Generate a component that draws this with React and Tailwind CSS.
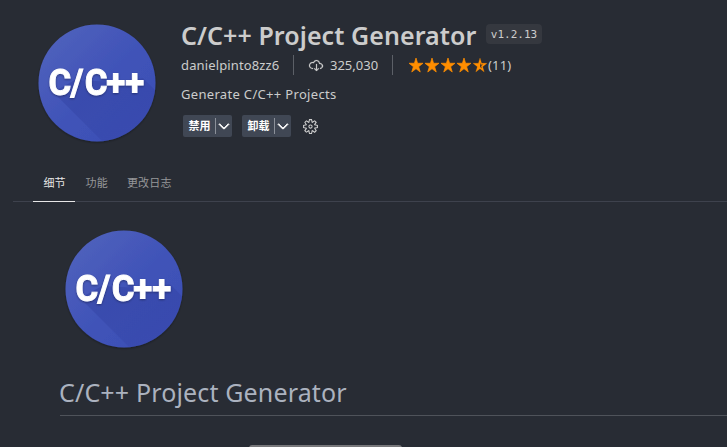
import React from 'react';
import { VscGear, VscStarFull, VscStarHalf, VscCloudDownload, VscChevronDown } from 'react-icons/vsc';

function Logo({ id }) {
  return (
    <svg width="124" height="124" viewBox="0 0 124 124" className="block shrink-0">
      <defs>
        <linearGradient id={id + 'bg'} x1="0.1" y1="0.1" x2="0.8" y2="0.8">
          <stop offset="0" stopColor="#4f61bc" />
          <stop offset="0.6" stopColor="#4053b8" />
          <stop offset="1" stopColor="#3d50b6" />
        </linearGradient>
        <linearGradient id={id + 'sh'} x1="0" y1="0" x2="0.7" y2="1">
          <stop offset="0" stopColor="#303f9f" stopOpacity="0.5" />
          <stop offset="1" stopColor="#303f9f" stopOpacity="0.25" />
        </linearGradient>
        <clipPath id={id + 'c'}>
          <circle cx="62" cy="61" r="58.5" />
        </clipPath>
        <filter id={id + 'f'} x="-20%" y="-20%" width="140%" height="140%">
          <feDropShadow dx="0" dy="1" stdDeviation="1.2" floodColor="#000" floodOpacity="0.35" />
        </filter>
      </defs>
      <circle cx="62" cy="61" r="58.5" fill={'url(#' + id + 'bg)'} filter={'url(#' + id + 'f)'} />
      <path d="M18 70 L72 124 H124 V72 L108 56 L80 60 L40 58Z" fill={'url(#' + id + 'sh)'} clipPath={'url(#' + id + 'c)'} />
      <text
        transform="scale(0.94 1)"
        x="14.400 37.700 52.900 75.800 96"
        y="73.500 73.500 73.500 73.500 73.500"
        fill="#fff"
        stroke="#fff"
        strokeWidth="0.9"
        fontFamily="Roboto, sans-serif"
        fontWeight="700"
        fontSize="37"
        filter={'url(#' + id + 'f)'}
      >
        C/C++
      </text>
    </svg>
  );
}

function ActionButton({ children }) {
  return (
    <div className="flex h-[22px] w-[49px] items-center rounded-[2px] bg-[#404754] text-white">
      <span className="w-8 shrink-0 pl-[5.5px] text-[11px] font-bold leading-[22px]">{children}</span>
      <span className="h-4 w-px shrink-0 bg-[#8b9099]" />
      <VscChevronDown className="shrink-0" size={16} stroke="currentColor" strokeWidth="0.9" />
    </div>
  );
}

function Stars() {
  return (
    <div className="flex text-[#ff8e00]">
      {[0, 1, 2, 3].map((i) => (
        <VscStarFull key={i} size={16} stroke="currentColor" strokeWidth="0.7" />
      ))}
      <VscStarHalf size={16} stroke="currentColor" strokeWidth="0.2" />
    </div>
  );
}

export default function App() {
  return (
    <div className="h-[447px] w-[727px] overflow-hidden bg-[#282c34] font-['Noto_Sans','Noto_Sans_CJK_SC',sans-serif] text-[#cccccc]">
      <header className="flex h-[165px] pl-[35px] pt-[22px]">
        <Logo id="a" />
        <div className="ml-[22px] flex flex-col">
          <div className="flex h-[26px] items-center">
            <h1 className="w-[305px] whitespace-nowrap text-[25px] font-semibold leading-[24px] tracking-[0.07px]">C/C++ Project Generator</h1>
            <span className="-mt-[2px] h-5 w-14 rounded bg-[#35383f] text-center font-['DejaVu_Sans_Mono',monospace] text-[11px] leading-[21px]">v1.2.13</span>
          </div>
          <div className="mt-[7px] flex h-5 items-center whitespace-nowrap text-[13px] leading-5">
            <span className="w-28 tracking-[0.13px]">danielpinto8zz6</span>
            <span className="h-5 w-px bg-[#5c6067]" />
            <VscCloudDownload className="ml-[14px]" size={16} stroke="currentColor" strokeWidth="0.2" />
            <span className="ml-[6px] w-[62px]">325,030</span>
            <span className="h-5 w-px bg-[#5c6067]" />
            <div className="ml-[15px]"><Stars /></div>
            <span className="tracking-[0.2px]">(11)</span>
          </div>
          <p className="mt-[9px] h-5 whitespace-nowrap text-[13px] leading-5 tracking-[0.32px]">Generate C/C++ Projects</p>
          <div className="ml-[2px] mt-[11px] flex h-[22px] items-center">
            <ActionButton>禁用</ActionButton>
            <div className="ml-[10px]"><ActionButton>卸载</ActionButton></div>
            <VscGear className="ml-[11px]" size={17} />
          </div>
        </div>
      </header>
      <nav className="ml-[13px] flex h-[37px] border-b border-[#3e424d] pl-5 text-[11px] leading-9 text-[#969799]">
        <span className="h-[37px] w-[42px] border-b border-[#e7e7e7] pl-[10.5px] text-[#e7e7e7]">细节</span>
        <span className="ml-[10.500px] tracking-[0.2px]">功能</span>
        <span className="ml-[19px] tracking-[0.2px]">更改日志</span>
      </nav>
      <main className="pl-[60px] pt-[26px]">
        <div className="ml-[2px]"><Logo id="b" /></div>
        <h2 className="mt-[22px] h-[42px] border-b border-[#4f535a] text-[25px] leading-[37px] text-[#abb2bf]">
          <span className="-ml-px whitespace-nowrap tracking-[0.15px]">C/C++ Project Generator</span>
        </h2>
        <div className="ml-[189px] mt-[29px] h-5 w-[153px] rounded-[3px] bg-[#77777a]" />
      </main>
    </div>
  );
}
